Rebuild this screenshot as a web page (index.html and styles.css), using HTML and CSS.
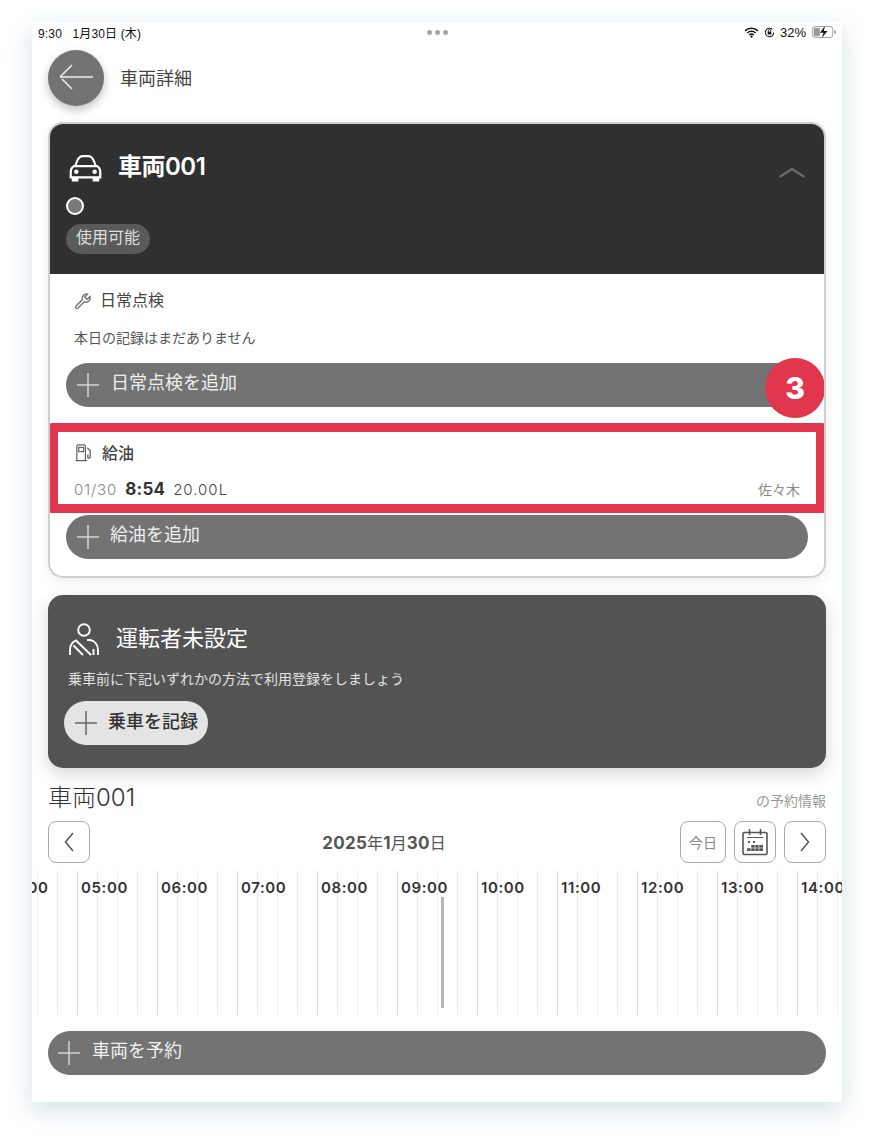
FILE: index.html
```html
<!DOCTYPE html>
<html lang="ja">
<head>
<meta charset="utf-8">
<title>車両詳細</title>
<link rel="stylesheet" href="styles.css">
</head>
<body>
<main class="screen">
  <div class="status">
    <span class="status-time">9:30&nbsp;&nbsp;&nbsp;1月30日 (木)</span>
    <span class="status-dots"><i></i><i></i><i></i></span>
    <span class="status-right">
      <svg class="ic-wifi" viewBox="0 0 16 12"><path d="M1 4.200a10 10 0 0 1 14 0M3.400 6.600a6.600 6.600 0 0 1 9.200 0M5.700 8.800a3.300 3.300 0 0 1 4.600 0" fill="none" stroke="#111" stroke-width="1.700"/><circle cx="8" cy="10.600" r="1.200" fill="#111"/></svg>
      <svg class="ic-lock" viewBox="0 0 12 12"><path d="M10.600 6a4.600 4.600 0 1 1-1.400-3.300" fill="none" stroke="#111" stroke-width="1.100"/><rect x="4" y="5" width="4" height="3.200" fill="#111"/><path d="M4.800 5V4a1.200 1.200 0 0 1 2.400 0v1" fill="none" stroke="#111"/></svg>
      <span>32%</span>
      <svg class="ic-batt" viewBox="0 0 26 13"><rect x=".5" y=".5" width="22" height="12" rx="3" fill="none" stroke="#999"/><rect x="2" y="2" width="6.500" height="9" fill="#999"/><path d="M24 4.500a2 2 0 0 1 0 4z" fill="#999"/><path d="M14 0 8.500 7.200h4L10.500 13l6.300-7.500h-4z" fill="#111"/></svg>
    </span>
  </div>

  <header class="page-head">
    <button class="back">
      <svg viewBox="0 0 56 56"><path d="M12 27h33M12 27 24 15M14 29 24 39" fill="none" stroke="#eee" stroke-width="1.500"/></svg>
    </button>
    <h1 class="page-title">車両詳細</h1>
  </header>

  <section class="vehicle">
    <div class="vehicle-top">
      <div class="vehicle-name-row">
        <svg class="ic-car" viewBox="1 0 32 27.500"><path d="M7 12C8.500 6 10 2.500 13.500 2h7c3.500.5 5 4 6.500 10" fill="none" stroke="#fff" stroke-width="2.200"/><path d="M5.500 12C3.500 13 2.500 15 2.500 18v5h29v-5c0-3-1-5-3-6z" fill="none" stroke="#fff" stroke-width="2.200"/><path d="M3.500 23h6.500v4H3.500zM24 23h6.500v4H24z" fill="#fff"/><circle cx="8" cy="17.500" r="2.200" fill="#fff"/><circle cx="26" cy="17.500" r="2.200" fill="#fff"/></svg>
        <span class="vehicle-name">車両001</span>
        <svg class="ic-up" viewBox="0 0 28 12"><path d="M1.500 11 14 3l12.500 8" fill="none" stroke="#686868" stroke-width="2.400"/></svg>
      </div>
      <span class="radio"></span>
      <span class="pill">使用可能</span>
    </div>

    <div class="vehicle-body">
      <div class="sect-title inspect-title">
        <svg class="ic-wrench" viewBox="0 0 18 18"><path d="M16 4.500 13 7.200 10.800 5 13.500 2.200A4.300 4.300 0 0 0 8.300 7.700L2 14c-1.300 1.500.5 3.200 2 2l6.300-6.200A4.300 4.300 0 0 0 16 4.500z" fill="none" stroke="#777" stroke-width="1.500"/></svg>
        <span>日常点検</span>
      </div>
      <p class="empty">本日の記録はまだありません</p>
      <button class="wide">
        <svg class="plus" viewBox="0 0 24 24"><path d="M1 12h22M12 0v24" stroke="#d4d4d4" stroke-width="1.500"/></svg>
        <span>日常点検を追加</span>
      </button>

      <div class="fuel">
        <div class="sect-title fuel-title">
          <svg class="ic-fuel" viewBox="0 0 20 20"><path d="M3 18V3.500C3 2.500 3.500 2 4.500 2h6c1 0 1.500.5 1.500 1.500V18M1.500 18.500h12M5 4.500h5V9H5z" fill="none" stroke="#666" stroke-width="1.300"/><path d="M14 5l3 3v7c0 1.500-2.500 1.500-2.500 0V12" fill="none" stroke="#777" stroke-width="1.600"/></svg>
          <span>給油</span>
        </div>
        <div class="fuel-row">
          <span class="f-date">01/30</span>
          <b class="f-time">8:54</b>
          <span class="f-vol">20.00L</span>
          <span class="f-name">佐々木</span>
        </div>
      </div>

      <button class="wide fuel-add">
        <svg class="plus" viewBox="0 0 24 24"><path d="M1 12h22M12 0v24" stroke="#d4d4d4" stroke-width="1.500"/></svg>
        <span>給油を追加</span>
      </button>

      <div class="highlight"></div>
      <div class="badge">3</div>
    </div>
  </section>

  <section class="driver">
    <div class="driver-head">
      <svg class="ic-driver" viewBox="0 0 32 34"><circle cx="16" cy="8" r="5.800" fill="none" stroke="#fff" stroke-width="1.900"/><path d="M2 33v-5c0-5 3-8.500 7-9.800M19 18h3c5 1 8 5 8 10v5M25.500 27v6" fill="none" stroke="#fff" stroke-width="1.900"/><path d="M8 18.500 23 33M5.500 23.500 15 33" fill="none" stroke="#fff" stroke-width="1.900"/></svg>
      <span class="driver-title">運転者未設定</span>
    </div>
    <p class="driver-note">乗車前に下記いずれかの方法で利用登録をしましょう</p>
    <button class="ride">
      <svg class="plus" viewBox="0 0 24 24"><path d="M1 12h22M12 0v24" stroke="#666" stroke-width="1.500"/></svg>
      <span>乗車を記録</span>
    </button>
  </section>

  <div class="res-head">
    <span class="res-name">車両001</span>
    <span class="res-note">の予約情報</span>
  </div>

  <nav class="date-nav">
    <button class="sq">
      <svg viewBox="0 0 12 24" class="chev"><path d="M10 3 2.500 12 10 21" fill="none" stroke="#555" stroke-width="1.500"/></svg>
    </button>
    <div class="date"><b>2025</b>年<b>1</b>月<b>30</b>日</div>
    <button class="sq today">今日</button>
    <button class="sq">
      <svg class="ic-cal" viewBox="0 0 26 28"><path d="M2.500 4.500h21a1.500 1.500 0 0 1 1.500 1.500v19a1.500 1.500 0 0 1-1.500 1.500h-21A1.500 1.500 0 0 1 1 25V6a1.500 1.500 0 0 1 1.500-1.500z" fill="none" stroke="#555" stroke-width="1.600"/><path d="M7.500 1v6M18.500 1v6" stroke="#555" stroke-width="1.600"/><path d="M5 9.500h16" stroke="#555"/><path d="M6 13h2v2H6zM11 13h2v2h-2zM9 17h12v6H5v-3h4z" fill="#555"/><path d="M9 17v6M13 17v6M17 17v6M5 20h16" stroke="#fff" stroke-width=".6"/></svg>
    </button>
    <button class="sq">
      <svg viewBox="0 0 12 24" class="chev"><path d="M2 3 9.500 12 2 21" fill="none" stroke="#555" stroke-width="1.500"/></svg>
    </button>
  </nav>

  <div class="timeline">
    <div class="track">
      <div class="hour"><span>04:00</span></div>
      <div class="hour"><span>05:00</span></div>
      <div class="hour"><span>06:00</span></div>
      <div class="hour"><span>07:00</span></div>
      <div class="hour"><span>08:00</span></div>
      <div class="hour"><span>09:00</span></div>
      <div class="hour"><span>10:00</span></div>
      <div class="hour"><span>11:00</span></div>
      <div class="hour"><span>12:00</span></div>
      <div class="hour"><span>13:00</span></div>
      <div class="hour"><span>14:00</span></div>
    </div>
    <div class="now"></div>
  </div>

  <button class="wide reserve">
    <svg class="plus" viewBox="0 0 24 24"><path d="M1 12h22M12 0v24" stroke="#d4d4d4" stroke-width="1.500"/></svg>
    <span>車両を予約</span>
  </button>
</main>
</body>
</html>
```
FILE: styles.css
```css
* { box-sizing: border-box; }
html, body { margin: 0; padding: 0; background: #fff; }
body {
  width: 874px;
  height: 1144px;
  overflow: hidden;
  padding: 22px 32px 0;
  font-family: "Inter", "Noto Sans CJK JP", sans-serif;
  color: #333;
}
button { font: inherit; border: 0; padding: 0; cursor: pointer; }
p, h1 { margin: 0; }

.screen {
  position: relative;
  width: 810px;
  height: 1080px;
  padding: 0 16px;
  background: #fff;
  box-shadow: 0 8px 24px rgba(105, 155, 175, .3);
}

.status {
  display: grid;
  grid-template-columns: 1fr auto 1fr;
  align-items: center;
  height: 20px;
  margin: 0 -11px 0 -10px;
  font-family: "Liberation Sans", "Noto Sans CJK JP", sans-serif;
  font-size: 12px;
  color: #111;
}
.status-time { letter-spacing: .15px; }
.status-dots { display: flex; gap: 3px; }
.status-dots i { width: 5px; height: 5px; border-radius: 50%; background: #a5a5a5; }
.status-right { display: flex; align-items: center; justify-content: flex-end; gap: 5px; font-size: 13px; }
.ic-wifi { width: 15px; height: 11px; }
.ic-lock { width: 11px; height: 11px; }
.ic-batt { width: 26px; height: 12px; }

.page-head { display: flex; align-items: center; gap: 16px; margin-top: 8px; height: 56px; }
.back {
  width: 56px;
  height: 56px;
  border-radius: 50%;
  background: #737373;
  box-shadow: 0 4px 10px rgba(0, 0, 0, .25);
}
.back svg { display: block; width: 56px; height: 56px; }
.page-title { font-size: 18px; font-weight: 400; color: #444; margin-top: -3px; }

.vehicle {
  width: 778px;
  height: 456px;
  margin-top: 16px;
  border: 2px solid #cfcfcf;
  border-radius: 15px;
  background: #fff;
  box-shadow: 0 3px 12px rgba(0, 0, 0, .08);
  overflow: hidden;
  position: relative;
}
.vehicle-top {
  height: 150px;
  padding: 26px 16px 0;
  background: #303030;
  display: flex;
  flex-direction: column;
  align-items: flex-start;
}
.vehicle-name-row { display: flex; align-items: center; width: 100%; height: 38px; }
.ic-car { width: 33px; height: 28px; margin: 0 16px 3px 3px; flex: none; }
.vehicle-name { font-size: 24px; font-weight: 600; line-height: 30px; letter-spacing: -.5px; color: #fff; flex: 1; margin-bottom: 4px; }
.ic-up { width: 28px; height: 12px; margin-right: 2px; margin-top: 6px; }
.radio {
  width: 18px;
  height: 18px;
  margin-top: 9px;
  border: 2px solid #fff;
  border-radius: 50%;
  background: #7a7a7a;
}
.pill {
  margin-top: 9px;
  padding: 0 10px;
  height: 30px;
  line-height: 26px;
  border-radius: 15px;
  background: #5a5a5a;
  color: #dedede;
  font-size: 16px;
}

.vehicle-body { position: relative; padding: 0 16px; height: 302px; }
.sect-title { display: flex; align-items: center; font-size: 16px; font-weight: 400; color: #444; }
.inspect-title { padding: 13px 0 0 8px; height: 36px; gap: 8px; }
.ic-wrench { width: 18px; height: 18px; margin-top: 4px; }
.empty { margin: 18px 0 0 8px; font-size: 14px; line-height: 20px; color: #555; }

.wide {
  display: flex;
  align-items: center;
  width: 742px;
  height: 44px;
  border-radius: 22px;
  background: #737373;
  color: #f0f0f0;
  font-size: 18px;
  font-weight: 400;
  text-align: left;
}
.wide span { margin-top: -9px; }
.plus { width: 24px; height: 24px; flex: none; margin-left: 10px; margin-right: 11px; }
.vehicle-body > .wide { margin-top: 15px; }
.vehicle-body > .fuel-add { margin-top: 2px; }
.fuel-add .plus { margin-right: 10px; }

.fuel { height: 90px; margin: 16px -8px 0; padding: 0 16px; }
.fuel-title { padding: 13px 0 0; height: 45px; gap: 9px; font-weight: 500; }
.ic-fuel { width: 19px; height: 19px; }
.fuel-row { display: flex; align-items: baseline; margin-top: 11px; font-size: 15px; }
.f-date { color: #888; letter-spacing: .9px; font-weight: 300; }
.f-time { margin-left: 8px; font-size: 17px; letter-spacing: .2px; color: #333; }
.f-vol { margin-left: 8px; color: #444; letter-spacing: 1px; font-weight: 300; }
.f-name { margin-left: auto; font-size: 14px; color: #888; }

.highlight {
  position: absolute;
  left: -1px;
  top: 149px;
  width: 776px;
  height: 90px;
  border: 9px solid #e2364e;
  border-radius: 3px;
}
.badge {
  position: absolute;
  right: -1px;
  top: 84px;
  width: 60px;
  height: 60px;
  border-radius: 50%;
  background: #e2364e;
  color: #fff;
  font-size: 30px;
  font-weight: 800;
  line-height: 60px;
  text-align: center;
}

.driver {
  width: 778px;
  height: 173px;
  margin-top: 17px;
  padding: 27px 16px 0 20px;
  border-radius: 15px;
  background: #535353;
  box-shadow: 0 6px 18px rgba(0, 0, 0, .16);
}
.driver-head { display: flex; align-items: center; gap: 16px; height: 34px; }
.ic-driver { width: 32px; height: 34px; }
.driver-title { font-size: 22px; font-weight: 400; line-height: 30px; color: #fff; margin-bottom: 2px; }
.driver-note { margin-top: 13px; font-size: 14px; line-height: 20px; color: #e2e2e2; }
.ride {
  display: flex;
  align-items: center;
  width: 144px;
  height: 44px;
  margin: 12px 0 0 -4px;
  border-radius: 22px;
  background: #e4e4e4;
  color: #333;
  font-size: 18px;
  font-weight: 500;
}
.ride span { margin-top: -6px; }
.ride .plus { margin-right: 10px; }

.res-head {
  display: flex;
  justify-content: space-between;
  align-items: flex-end;
  width: 778px;
  height: 29px;
  margin-top: 15px;
}
.res-name { font-size: 24px; font-weight: 300; line-height: 29px; color: #333; }
.res-note { font-size: 14px; line-height: 23px; color: #999; }

.date-nav { display: flex; align-items: center; gap: 8px; width: 778px; height: 42px; margin-top: 9px; }
.sq {
  display: flex;
  align-items: center;
  justify-content: center;
  width: 42px;
  height: 42px;
  border: 1px solid #aaa;
  border-radius: 8px;
  background: #fff;
}
.chev { width: 12px; height: 24px; }
.ic-cal { width: 26px; height: 28px; }
.today { width: 46px; font-size: 14px; color: #888; }
.date { flex: 1; text-align: center; font-size: 16px; color: #555; margin-left: 42px; margin-right: 44px; }
.date b { font-size: 17px; letter-spacing: .3px; }

.timeline {
  position: relative;
  height: 144px;
  margin: 8px -16px 0;
  overflow: hidden;
}
.track { display: flex; margin-left: -35px; height: 144px; }
.hour {
  flex: none;
  width: 80px;
  height: 144px;
  border-left: 1px solid #d8d8d8;
  background: repeating-linear-gradient(90deg, transparent 0, transparent 19px, #ececec 19px, #ececec 20px);
  position: relative;
}
.hour span {
  position: absolute;
  left: 3px;
  top: 8px;
  font-size: 15px;
  font-weight: 600;
  line-height: 18px;
  letter-spacing: .6px;
  color: #333;
}
.now {
  position: absolute;
  left: 409px;
  top: 26px;
  width: 3px;
  height: 111px;
  background: #b5b5b5;
}

.reserve { width: 778px; margin-top: 16px; }
.reserve .plus { margin-left: 9px; margin-right: 11px; }
```
